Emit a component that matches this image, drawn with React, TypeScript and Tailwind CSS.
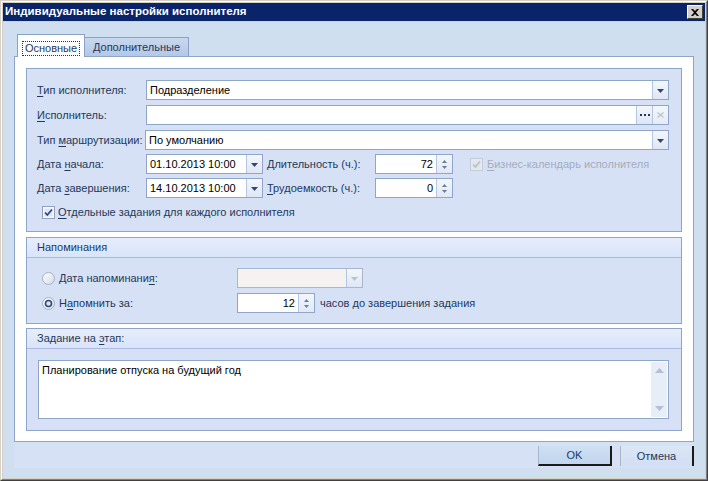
import React from "react"

function U({ children }: { children: React.ReactNode }) {
    return <span className="underline underline-offset-[2px]">{children}</span>
}

function DropBtn({ disabled = false }: { disabled?: boolean }) {
    return (
        <div className="flex w-[16px] shrink-0 items-center justify-center border-l border-[#b6c6df] bg-gradient-to-b from-[#f3f7fc] to-[#dfe7f4]">
            <svg width="7" height="6" viewBox="0 0 7 6">
                <path d="M0 2h7L3.5 6z" fill={disabled ? "#b8c2d0" : "#34476a"} />
            </svg>
        </div>
    )
}

function Spin({ value }: { value: string }) {
    return (
        <div className="flex h-[20px] w-[78px] shrink-0 border border-[#8fa5c9] bg-white">
            <div className="flex flex-1 items-center justify-end pr-[3px] text-black">{value}</div>
            <div className="flex w-[16px] flex-col items-center justify-center gap-[3px] border-l border-[#b6c6df] bg-gradient-to-b from-[#f3f7fc] to-[#e1e9f5]">
                <svg width="5" height="3" viewBox="0 0 5 3">
                    <path d="M2.5 0L5 3H0z" fill="#6a7d9b" />
                </svg>
                <svg width="5" height="3" viewBox="0 0 5 3">
                    <path d="M0 0h5L2.5 3z" fill="#6a7d9b" />
                </svg>
            </div>
        </div>
    )
}

function Check({ disabled = false }: { disabled?: boolean }) {
    return (
        <svg width="13" height="13" viewBox="0 0 13 13" className="shrink-0">
            <rect x="0.5" y="0.5" width="12" height="12" fill={disabled ? "#e6eaf0" : "#f4f7fc"} stroke={disabled ? "#c3cbd7" : "#8ea2c2"} />
            <rect x="2.5" y="2.5" width="8" height="8" fill={disabled ? "#e1e5ec" : "#dfe7f3"} />
            <path d="M3 6.5l2.3 2.5L10 3.5" fill="none" stroke={disabled ? "#b9c1cd" : "#2a4a8a"} strokeWidth="1.8" />
        </svg>
    )
}

function Radio({ checked = false }: { checked?: boolean }) {
    return (
        <svg width="13" height="13" viewBox="0 0 13 13" className="shrink-0">
            <defs>
                <linearGradient id={checked ? "rg1" : "rg0"} x1="0" y1="0" x2="1" y2="1">
                    <stop offset="0" stopColor="#ffffff" />
                    <stop offset="1" stopColor="#d3dbe7" />
                </linearGradient>
            </defs>
            <circle cx="6.5" cy="6.5" r="6" fill={`url(#${checked ? "rg1" : "rg0"})`} stroke="#a3b1c6" />
            {checked && <circle cx="6.5" cy="6.5" r="3" fill="#dbe4f2" stroke="#2f4a78" strokeWidth="1.6" />}
        </svg>
    )
}

function Row({ label, children }: { label: React.ReactNode; children: React.ReactNode }) {
    return (
        <div className="flex h-[20px] items-stretch">
            <div className="flex w-[109px] shrink-0 items-center text-[#1e395b]">
                <span>{label}</span>
            </div>
            {children}
        </div>
    )
}

function GroupHeader({ children }: { children: React.ReactNode }) {
    return (
        <div className="flex h-[20px] shrink-0 items-center border-b border-[#a9bcdb] bg-gradient-to-b from-[#e6eefc] to-[#d9e4f9] pl-[10px] text-[#1e395b]">
            <span>{children}</span>
        </div>
    )
}

export default function App() {
    return (
        <div className="flex h-[481px] w-[708px] flex-col border border-t-[#d4d0c8] border-l-[#d4d0c8] border-r-[#404040] border-b-[#404040] font-['Liberation_Sans',Arial,sans-serif] text-[11px] leading-none">
            <div className="flex flex-1 flex-col border border-t-white border-l-white border-r-[#808080] border-b-[#808080] bg-[#d4d0c8] p-[1px]">
                {/* title bar */}
                <div className="flex h-[18px] shrink-0 items-center justify-between bg-[#0a246a] pl-[2px] pr-[2px]">
                    <span className="text-[11.5px] font-bold text-white">Индивидуальные настройки исполнителя</span>
                    <div className="flex h-[14px] w-[16px] items-center justify-center border border-t-white border-l-white border-r-[#404040] border-b-[#404040] bg-[#d4d0c8]">
                        <svg width="8" height="7" viewBox="0 0 8 7">
                            <path d="M0 0h2l2 2 2-2h2L5 3.5 8 7H6L4 5 2 7H0l3-3.5z" fill="#000" />
                        </svg>
                    </div>
                </div>

                {/* body */}
                <div className="mt-[1px] flex flex-1 flex-col bg-[#cfdfef] px-[11px] pt-[12px]">
                    {/* tabs */}
                    <div className="flex h-[22px] items-end pl-[3px]">
                        <div className="relative z-10 -mb-[1px] flex h-[23px] w-[68px] items-start justify-center border border-b-0 border-[#8aa0c6] bg-white pt-[6px]">
                            <span className="border border-dotted border-[#333] px-[2px] py-[1px] text-[#1e395b]">Основные</span>
                        </div>
                        <div className="flex h-[19px] w-[104px] items-center justify-center border border-b-0 border-l-0 border-[#8aa0c6] bg-gradient-to-b from-[#c9d8ef] to-[#b4c7e5] text-[#1e395b]">
                            Дополнительные
                        </div>
                    </div>

                    {/* panel */}
                    <div className="flex h-[386px] flex-col border border-[#8ea4c8] bg-white px-[11px] pt-[11px]">
                        {/* group 1 */}
                        <div className="flex h-[164px] shrink-0 flex-col border border-[#8fa5c9] bg-[#d6e1f6] pl-[10px] pr-[12px] pt-[11px]">
                            <Row label={<><U>Т</U>ип исполнителя:</>}>
                                <div className="flex flex-1 border border-[#8fa5c9] bg-white">
                                    <div className="flex flex-1 items-center pl-[3px] text-black">Подразделение</div>
                                    <DropBtn />
                                </div>
                            </Row>
                            <div className="mt-[5px]">
                                <Row label={<><U>И</U>сполнитель:</>}>
                                    <div className="flex flex-1 border border-[#8fa5c9] bg-white">
                                        <div className="flex-1" />
                                        <div className="flex w-[16px] items-center justify-center gap-[2px] border-l border-[#b6c6df] bg-gradient-to-b from-[#f3f7fc] to-[#dfe7f4]">
                                            <span className="h-[2px] w-[2px] bg-[#1e395b]" />
                                            <span className="h-[2px] w-[2px] bg-[#1e395b]" />
                                            <span className="h-[2px] w-[2px] bg-[#1e395b]" />
                                        </div>
                                        <div className="flex w-[16px] items-center justify-center border-l border-[#b6c6df] bg-gradient-to-b from-[#f3f7fc] to-[#e6ecf6]">
                                            <svg width="7" height="6" viewBox="0 0 7 6">
                                                <path d="M0.5 0.5l6 5M6.5 0.5l-6 5" stroke="#b8c2d0" strokeWidth="1.3" />
                                            </svg>
                                        </div>
                                    </div>
                                </Row>
                            </div>
                            <div className="mt-[5px]">
                                <Row label={<>Тип <U>м</U>аршрутизации:</>}>
                                    <div className="-ml-[1px] flex flex-1 border border-[#8fa5c9] bg-white">
                                        <div className="flex flex-1 items-center pl-[3px] text-black">По умолчанию</div>
                                        <DropBtn />
                                    </div>
                                </Row>
                            </div>
                            <div className="mt-[4px]">
                                <Row label={<>Дата <U>н</U>ачала:</>}>
                                    <div className="flex w-[117px] shrink-0 border border-[#8fa5c9] bg-white">
                                        <div className="flex flex-1 items-center pl-[3px] text-black">01.10.2013 10:00</div>
                                        <DropBtn />
                                    </div>
                                    <div className="ml-[4px] flex w-[108px] shrink-0 items-center text-[#1e395b]">
                                        <span><U>Д</U>лительность (ч.):</span>
                                    </div>
                                    <Spin value="72" />
                                    <div className="ml-[17px] flex items-center gap-[4px] text-[#a3adbb]">
                                        <Check disabled />
                                        <span><U>Б</U>изнес-календарь исполнителя</span>
                                    </div>
                                </Row>
                            </div>
                            <div className="mt-[4px]">
                                <Row label={<>Дата <U>з</U>авершения:</>}>
                                    <div className="flex w-[117px] shrink-0 border border-[#8fa5c9] bg-white">
                                        <div className="flex flex-1 items-center pl-[3px] text-black">14.10.2013 10:00</div>
                                        <DropBtn />
                                    </div>
                                    <div className="ml-[4px] flex w-[108px] shrink-0 items-center text-[#1e395b]">
                                        <span><U>Т</U>рудоемкость (ч.):</span>
                                    </div>
                                    <Spin value="0" />
                                </Row>
                            </div>
                            <div className="mt-[8px] flex items-center gap-[3px] pl-[5px] text-[#1e395b]">
                                <Check />
                                <span><U>О</U>тдельные задания для каждого исполнителя</span>
                            </div>
                        </div>

                        {/* group 2 */}
                        <div className="mt-[5px] flex h-[87px] shrink-0 flex-col border border-[#8fa5c9] bg-[#d6e1f6]">
                            <GroupHeader>Напоминания</GroupHeader>
                            <div className="flex flex-col gap-[5px] pl-[15px] pt-[10px]">
                                <div className="flex h-[20px] items-center">
                                    <div className="flex w-[195px] shrink-0 items-center gap-[4px] text-[#1e395b]">
                                        <Radio />
                                        <span>Дата напоминани<U>я</U>:</span>
                                    </div>
                                    <div className="flex h-full w-[126px] border border-[#a8b7d0] bg-[#f6f2f2]">
                                        <div className="flex-1" />
                                        <DropBtn disabled />
                                    </div>
                                </div>
                                <div className="flex h-[20px] items-center">
                                    <div className="flex w-[195px] shrink-0 items-center gap-[4px] text-[#1e395b]">
                                        <Radio checked />
                                        <span>Н<U>а</U>помнить за:</span>
                                    </div>
                                    <Spin value="12" />
                                    <span className="ml-[5px] text-[#1e395b]">часов до завершения задания</span>
                                </div>
                            </div>
                        </div>

                        {/* group 3 */}
                        <div className="mt-[4px] flex h-[103px] shrink-0 flex-col border border-[#8fa5c9] bg-[#d6e1f6]">
                            <GroupHeader>Задание на <U>э</U>тап:</GroupHeader>
                            <div className="ml-[11px] mr-[12px] mt-[11px] flex h-[59px] border border-[#8fa5c9] bg-white">
                                <div className="flex-1 pl-[3px] pt-[4px] text-black">Планирование отпуска на будущий год</div>
                                <div className="m-[1px] flex w-[16px] flex-col items-center justify-between bg-[#e8eef8] py-[6px]">
                                    <svg width="9" height="5" viewBox="0 0 9 5">
                                        <path d="M4.5 0L9 5H0z" fill="#b3c0d4" />
                                    </svg>
                                    <svg width="9" height="5" viewBox="0 0 9 5">
                                        <path d="M0 0h9L4.5 5z" fill="#b3c0d4" />
                                    </svg>
                                </div>
                            </div>
                        </div>
                    </div>

                    {/* buttons */}
                    <div className="flex h-[26px] items-start justify-end gap-[8px] bg-[#d6e1f6] pt-[4px]">
                        <button className="flex h-[20px] w-[74px] items-center justify-center border border-t-0 border-l-[#aab7c9] border-r-2 border-r-[#1a1a1a] border-b-2 border-b-[#1a1a1a] bg-gradient-to-b from-[#cfe0f4] to-[#c2d5ee] text-[11px] text-[#1e395b]">
                            OK
                        </button>
                        <button className="flex h-[20px] w-[74px] items-center justify-center border border-t-0 border-l-[#aab7c9] border-r-2 border-r-[#1a1a1a] border-b-0 bg-gradient-to-b from-[#dbe6f6] to-[#d2def2] text-[11px] text-[#1e395b]">
                            Отмена
                        </button>
                    </div>
                </div>
            </div>
        </div>
    )
}
